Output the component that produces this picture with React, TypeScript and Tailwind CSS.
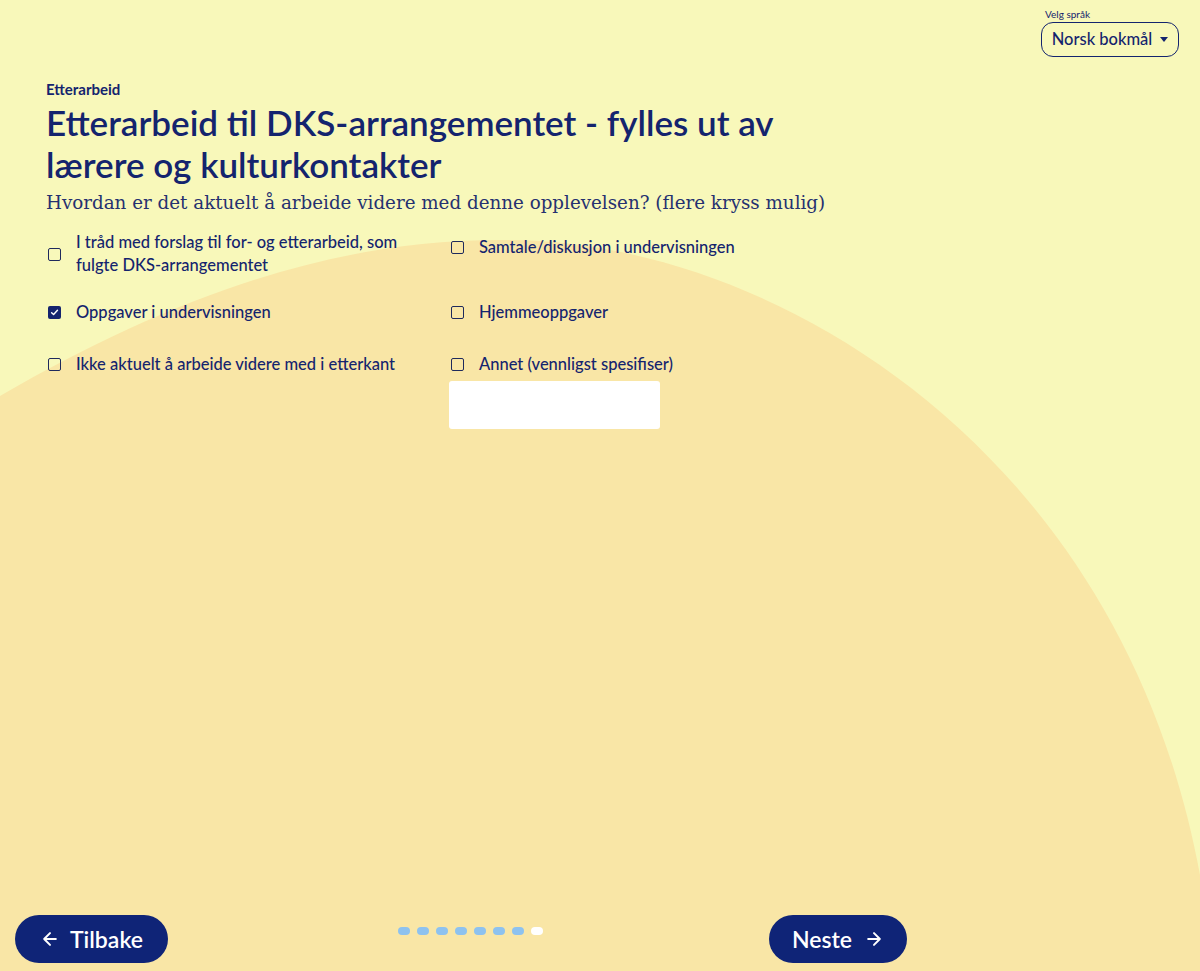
import { useState } from "react";

const options = [
  { id: "forslag", label: "I tråd med forslag til for- og etterarbeid, som fulgte DKS-arrangementet" },
  { id: "samtale", label: "Samtale/diskusjon i undervisningen" },
  { id: "oppgaver", label: "Oppgaver i undervisningen" },
  { id: "hjemme", label: "Hjemmeoppgaver" },
  { id: "ikke", label: "Ikke aktuelt å arbeide videre med i etterkant" },
  { id: "annet", label: "Annet (vennligst spesifiser)" },
];

function Checkbox({ checked }: { checked: boolean }) {
  return checked ? (
    <span className="flex h-[13px] w-[13px] shrink-0 items-center justify-center rounded-[2px] bg-[#14246e]">
      <svg width="9" height="9" viewBox="0 0 10 10" fill="none">
        <path d="M1.8 5.2 4 7.3 8.3 2.6" stroke="white" strokeWidth="1.6" strokeLinecap="round" strokeLinejoin="round" />
      </svg>
    </span>
  ) : (
    <span className="block h-[13px] w-[13px] shrink-0 rounded-[2px] border-[1.5px] border-[#1f2a5c]" />
  );
}

export default function App() {
  const [checked, setChecked] = useState<Record<string, boolean>>({ oppgaver: true });

  return (
    <div className="relative min-h-[971px] overflow-hidden bg-[#f8f8ba] font-['Lato',sans-serif] text-[#14246e]">
      <svg className="absolute inset-0 h-[971px] w-[1200px]" viewBox="0 0 1200 971" preserveAspectRatio="none">
        <path d="M0 396 C170 298 330 240 500 240 C760 236 1120 440 1200 875 L1200 971 L0 971 Z" fill="#f9e6a6" />
      </svg>

      <div className="relative flex min-h-[971px] flex-col">
        <div className="flex justify-end pr-[21px] pt-[8px]">
          <div className="flex flex-col">
            <span className="pl-[4px] text-[10px] leading-[13px] text-[#14246e]">Velg språk</span>
            <button className="mt-[1px] flex h-[35px] w-[138px] items-center justify-center gap-[8px] rounded-[12px] border border-[#14246e] text-[16.5px] font-medium">
              Norsk bokmål
              <svg width="8" height="5" viewBox="0 0 8 5">
                <path d="M0 0h8L4 5z" fill="#14246e" />
              </svg>
            </button>
          </div>
        </div>

        <main className="pl-[46px] pt-[22px]">
          <p className="text-[15px] font-bold leading-[20px]">Etterarbeid</p>
          <h1 className="mt-[2px] w-[800px] text-[35px] font-semibold leading-[42px]">
            Etterarbeid til DKS-arrangementet - fylles ut av lærere og kulturkontakter
          </h1>
          <p className="mt-[5px] font-['DejaVu_Serif',serif] text-[18.3px] leading-[26px] text-[#253170]">
            Hvordan er det aktuelt å arbeide videre med denne opplevelsen? (flere kryss mulig)
          </p>

          <div className="mt-[15px] grid w-[806px] grid-cols-2 gap-y-[19px]">
            {options.map((o) => (
              <label key={o.id} className="flex cursor-pointer flex-col pr-[40px]">
                <span className="flex min-h-[33px] items-center gap-[15px]">
                  <input
                    type="checkbox"
                    className="hidden"
                    checked={!!checked[o.id]}
                    onChange={() => setChecked({ ...checked, [o.id]: !checked[o.id] })}
                  />
                  <span className="pl-[2px]">
                    <Checkbox checked={!!checked[o.id]} />
                  </span>
                  <span className="text-[16.5px] font-medium leading-[23px]">{o.label}</span>
                </span>
                {o.id === "annet" && <input className="h-[48px] w-[211px] rounded-[3px] bg-white px-2 outline-none" />}
              </label>
            ))}
          </div>
        </main>

        <footer className="mt-auto flex w-[922px] items-center justify-between px-[15px] pb-[8px]">
          <button className="flex h-[48px] w-[153px] items-center justify-center gap-[10px] rounded-full bg-[#0f2477] text-[23px] font-semibold text-white">
            <svg width="20" height="20" viewBox="0 0 24 24" fill="none" stroke="white" strokeWidth="2.4" strokeLinecap="round" strokeLinejoin="round">
              <path d="M19 12H5M12 19l-7-7 7-7" />
            </svg>
            Tilbake
          </button>
          <div className="flex gap-[7px] pb-[16px] pl-[4px]">
            {[0, 1, 2, 3, 4, 5, 6, 7].map((i) => (
              <span key={i} className={i === 7 ? "h-[8px] w-[12px] rounded-full bg-white" : "h-[8px] w-[12px] rounded-full bg-[#8ec2ef]"} />
            ))}
          </div>
          <button className="flex h-[48px] w-[138px] items-center justify-center gap-[12px] rounded-full bg-[#0f2477] text-[23px] font-semibold text-white">
            Neste
            <svg width="20" height="20" viewBox="0 0 24 24" fill="none" stroke="white" strokeWidth="2.4" strokeLinecap="round" strokeLinejoin="round">
              <path d="M5 12h14M12 5l7 7-7 7" />
            </svg>
          </button>
        </footer>
      </div>
    </div>
  );
}
